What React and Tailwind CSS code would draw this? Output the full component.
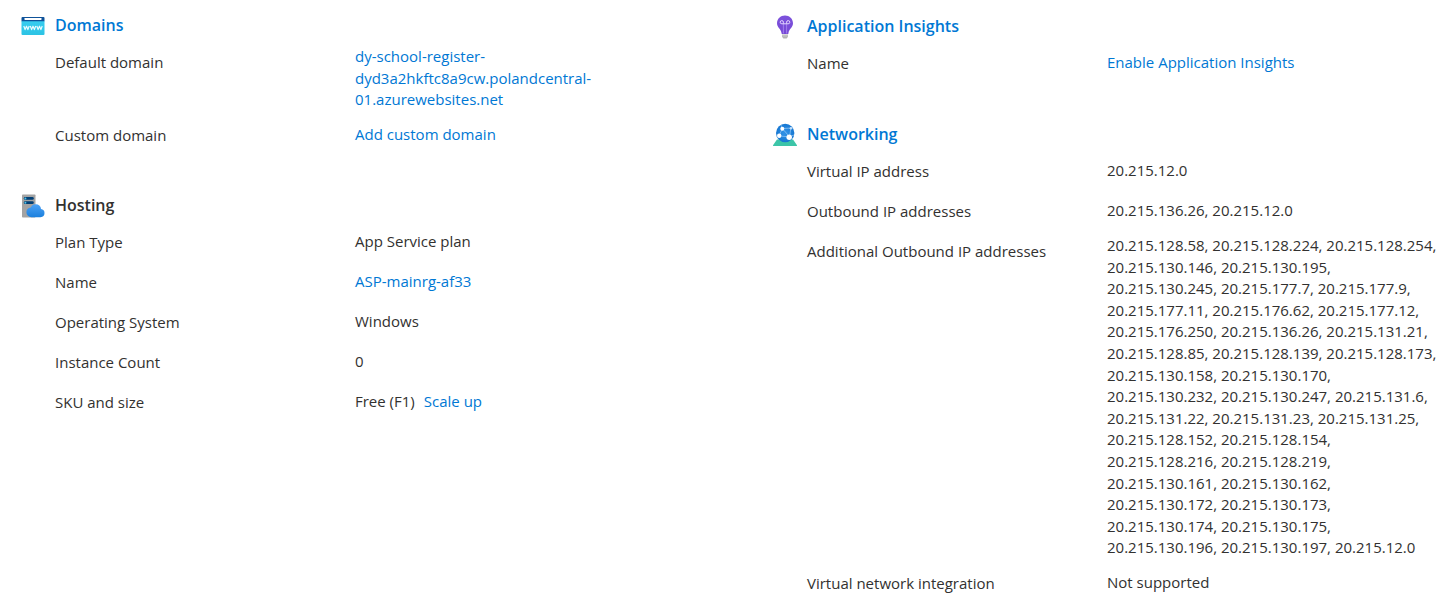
import React from "react";

const outboundAddresses = [
  "20.215.128.58", "20.215.128.224", "20.215.128.254", "20.215.130.146", "20.215.130.195",
  "20.215.130.245", "20.215.177.7", "20.215.177.9", "20.215.177.11", "20.215.176.62",
  "20.215.177.12", "20.215.176.250", "20.215.136.26", "20.215.131.21", "20.215.128.85",
  "20.215.128.139", "20.215.128.173", "20.215.130.158", "20.215.130.170", "20.215.130.232",
  "20.215.130.247", "20.215.131.6", "20.215.131.22", "20.215.131.23", "20.215.131.25",
  "20.215.128.152", "20.215.128.154", "20.215.128.216", "20.215.128.219", "20.215.130.161",
  "20.215.130.162", "20.215.130.172", "20.215.130.173", "20.215.130.174", "20.215.130.175",
  "20.215.130.196", "20.215.130.197", "20.215.12.0",
];

function DomainsIcon() {
  return (
    <svg viewBox="0 0 24 24" className="mt-0.5 size-6 shrink-0" aria-hidden="true">
      <defs>
        <linearGradient id="domains-body" x1="0" y1="1" x2="0" y2="0">
          <stop offset="0" stopColor="#2cc3e4" />
          <stop offset="1" stopColor="#38cdf0" />
        </linearGradient>
      </defs>
      <path d="M.5 7h23v13a1 1 0 0 1-1 1h-21a1 1 0 0 1-1-1z" fill="url(#domains-body)" />
      <path d="M1.500 3h21a1 1 0 0 1 1 1v3.200H.5V4a1 1 0 0 1 1-1z" fill="#0f5299" />
      <rect x="3.500" y="4" width="17" height="2" rx=".4" fill="#fff" />
      <path
        d="M2.800 12l1.300 3.600 1.400-3.400 1.400 3.400L8.200 12M9.300 12l1.300 3.600 1.400-3.400 1.400 3.400 1.300-3.600M15.800 12l1.300 3.600 1.400-3.400 1.400 3.400 1.300-3.600"
        fill="none"
        stroke="#e9fbff"
        strokeWidth="1.200"
        strokeLinejoin="round"
      />
    </svg>
  );
}

function HostingIcon() {
  return (
    <svg viewBox="0 0 24 24" className="mt-0.5 size-6 shrink-0" aria-hidden="true">
      <defs>
        <linearGradient id="hosting-cloud" x1="0" y1="1" x2="0" y2="0">
          <stop offset="0" stopColor="#1c80dd" />
          <stop offset="1" stopColor="#4ba2f6" />
        </linearGradient>
      </defs>
      <rect x="1" y=".5" width="13.500" height="23" rx=".8" fill="#a3a3a3" />
      <rect x="2.800" y="3" width="10" height="2.800" rx="1.400" fill="#003f76" />
      <rect x="2.800" y="7.300" width="10" height="2.800" rx="1.400" fill="#003f76" />
      <circle cx="4.400" cy="4.400" r="1" fill="#50c7e8" />
      <circle cx="4.400" cy="8.700" r="1" fill="#50c7e8" />
      <path
        d="M23.500 19a4 4 0 0 0-3.500-3.900 5.100 5.100 0 0 0-5.300-4.900 5.300 5.300 0 0 0-5 3.400A4.800 4.800 0 0 0 5.400 18.300a5 5 0 0 0 5.100 4.900h9a4.200 4.200 0 0 0 4-4.200z"
        fill="url(#hosting-cloud)"
      />
    </svg>
  );
}

function InsightsIcon() {
  return (
    <svg viewBox="0 0 24 24" className="mt-0.5 size-6 shrink-0" aria-hidden="true">
      <defs>
        <linearGradient id="insights-bulb" x1="0" y1="1" x2="0" y2="0">
          <stop offset="0" stopColor="#7648d6" />
          <stop offset="1" stopColor="#7d52dc" />
        </linearGradient>
      </defs>
      <path
        d="M20 8.300C20 3.800 16.500.5 12 .5S4 3.800 4 8.300c0 4.200 4.100 5.700 4.600 10.100.1.400.3.600.7.600h5.400c.4 0 .7-.2.700-.6.500-4.400 4.600-5.900 4.600-10.100z"
        fill="url(#insights-bulb)"
      />
      <path d="M10.400 18.500V9M13.600 18.500V9" stroke="#a685ee" strokeWidth=".9" />
      <path
        d="M10.400 8.800H8.900a1.600 1.600 0 1 1 1.500-1.600zM13.600 8.800h1.500a1.600 1.600 0 1 0-1.500-1.600zM10.400 8.800h3.200"
        fill="none"
        stroke="#e3d6ff"
        strokeWidth="1"
      />
      <path d="M9 19.500h6v2.300L13.600 23.500h-3.200L9 21.800z" fill="#b3b3b3" />
      <path d="M9 20.900h6" stroke="#dadada" strokeWidth=".7" />
    </svg>
  );
}

function NetworkingIcon() {
  return (
    <svg viewBox="0 0 24 24" className="mt-0.5 size-6 shrink-0" aria-hidden="true">
      <defs>
        <radialGradient id="networking-globe">
          <stop offset=".2" stopColor="#2f8fe4" />
          <stop offset="1" stopColor="#1677d2" />
        </radialGradient>
      </defs>
      <path d="M4 16.500h16l4 5.800a.5.500 0 0 1-.4.700H.4a.5.500 0 0 1-.4-.7z" fill="#3cc5a8" />
      <circle cx="12.200" cy="10" r="9.200" fill="url(#networking-globe)" />
      <path
        d="M9.300 5.500l7.300 8.300M9.300 5.500L6 13M6 13l10.600.8M9.300 5.500l8.500-.4M17.800 5.100l-1.200 8.700M9.300 5.500L8 2M16.600 13.800L21 12"
        fill="none"
        stroke="#8cc3f5"
        strokeWidth=".8"
      />
      <circle cx="9.300" cy="5.800" r="2" fill="#fff" />
      <circle cx="6.200" cy="12.800" r="2.200" fill="#fff" />
      <circle cx="16.200" cy="14.200" r="2.700" fill="#fff" />
      <circle cx="18" cy="5.300" r="1.300" fill="#c4e1fb" />
    </svg>
  );
}

function Link({ children }) {
  return (
    <a href="#" className="text-[#0078d4] hover:underline">
      {children}
    </a>
  );
}

function Section({ icon, title, linked, children }) {
  return (
    <section>
      <div className="flex h-[34px] items-center gap-[10px]">
        {icon}
        <h2 className="text-base font-semibold">{linked ? <Link>{title}</Link> : title}</h2>
      </div>
      <dl className="pl-[34px]">{children}</dl>
    </section>
  );
}

function Row({ label, children }) {
  return (
    <div className="grid grid-cols-[300px_minmax(0,1fr)]">
      <dt className="leading-10">{label}</dt>
      <dd className="flex min-h-10 flex-col justify-center py-1 leading-[1.44]">
        <div>{children}</div>
      </dd>
    </div>
  );
}

export default function App() {
  return (
    <main className="grid grid-cols-2 gap-x-[85px] bg-white pt-2 pr-4 pl-[21px] font-['Open_Sans','Noto_Sans',sans-serif] text-[15px] text-[#323130]">
      <div className="flex flex-col gap-[33px]">
        <Section icon={<DomainsIcon />} title="Domains" linked>
          <Row label="Default domain">
            <Link>dy-school-register-dyd3a2hkftc8a9cw.polandcentral-01.azurewebsites.net</Link>
          </Row>
          <Row label="Custom domain">
            <Link>Add custom domain</Link>
          </Row>
        </Section>
        <Section icon={<HostingIcon />} title="Hosting">
          <Row label="Plan Type">App Service plan</Row>
          <Row label="Name">
            <Link>ASP-mainrg-af33</Link>
          </Row>
          <Row label="Operating System">Windows</Row>
          <Row label="Instance Count">0</Row>
          <Row label="SKU and size">
            <span className="mr-[9px]">Free (F1)</span>
            <Link>Scale up</Link>
          </Row>
        </Section>
      </div>
      <div className="flex flex-col gap-[34px] pt-px">
        <Section icon={<InsightsIcon />} title="Application Insights" linked>
          <Row label="Name">
            <Link>Enable Application Insights</Link>
          </Row>
        </Section>
        <Section icon={<NetworkingIcon />} title="Networking" linked>
          <Row label="Virtual IP address">20.215.12.0</Row>
          <Row label="Outbound IP addresses">20.215.136.26, 20.215.12.0</Row>
          <Row label="Additional Outbound IP addresses">{outboundAddresses.join(", ")}</Row>
          <Row label="Virtual network integration">Not supported</Row>
        </Section>
      </div>
    </main>
  );
}
